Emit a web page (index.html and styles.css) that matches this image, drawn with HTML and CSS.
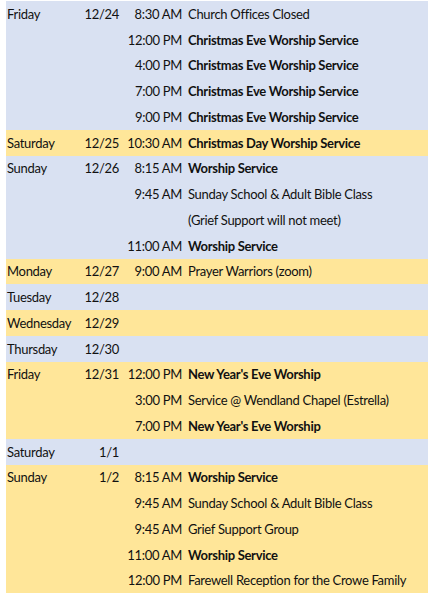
FILE: index.html
```html
<!DOCTYPE html>
<html>
<head>
<meta charset="utf-8">
<link rel="stylesheet" href="styles.css">
</head>
<body>
<div class="schedule">
  <div class="day blue">
    <div class="row"><span class="d">Friday</span><span class="dt">12/24</span><span class="t">8:30 AM</span><span class="e">Church Offices Closed</span></div>
    <div class="row"><span class="d"></span><span class="dt"></span><span class="t">12:00 PM</span><span class="e b">Christmas Eve Worship Service</span></div>
    <div class="row"><span class="d"></span><span class="dt"></span><span class="t">4:00 PM</span><span class="e b">Christmas Eve Worship Service</span></div>
    <div class="row"><span class="d"></span><span class="dt"></span><span class="t">7:00 PM</span><span class="e b">Christmas Eve Worship Service</span></div>
    <div class="row"><span class="d"></span><span class="dt"></span><span class="t">9:00 PM</span><span class="e b">Christmas Eve Worship Service</span></div>
  </div>
  <div class="day yellow">
    <div class="row"><span class="d">Saturday</span><span class="dt">12/25</span><span class="t">10:30 AM</span><span class="e b">Christmas Day Worship Service</span></div>
  </div>
  <div class="day blue">
    <div class="row"><span class="d">Sunday</span><span class="dt">12/26</span><span class="t">8:15 AM</span><span class="e b">Worship Service</span></div>
    <div class="row"><span class="d"></span><span class="dt"></span><span class="t">9:45 AM</span><span class="e">Sunday School &amp; Adult Bible Class</span></div>
    <div class="row"><span class="d"></span><span class="dt"></span><span class="t"></span><span class="e">(Grief Support will not meet)</span></div>
    <div class="row"><span class="d"></span><span class="dt"></span><span class="t">11:00 AM</span><span class="e b">Worship Service</span></div>
  </div>
  <div class="day yellow">
    <div class="row"><span class="d">Monday</span><span class="dt">12/27</span><span class="t">9:00 AM</span><span class="e">Prayer Warriors (zoom)</span></div>
  </div>
  <div class="day blue">
    <div class="row"><span class="d">Tuesday</span><span class="dt">12/28</span><span class="t"></span><span class="e"></span></div>
  </div>
  <div class="day yellow">
    <div class="row"><span class="d">Wednesday</span><span class="dt">12/29</span><span class="t"></span><span class="e"></span></div>
  </div>
  <div class="day blue">
    <div class="row"><span class="d">Thursday</span><span class="dt">12/30</span><span class="t"></span><span class="e"></span></div>
  </div>
  <div class="day yellow">
    <div class="row"><span class="d">Friday</span><span class="dt">12/31</span><span class="t">12:00 PM</span><span class="e b">New Year's Eve Worship</span></div>
    <div class="row"><span class="d"></span><span class="dt"></span><span class="t">3:00 PM</span><span class="e">Service @ Wendland Chapel (Estrella)</span></div>
    <div class="row"><span class="d"></span><span class="dt"></span><span class="t">7:00 PM</span><span class="e b">New Year's Eve Worship</span></div>
  </div>
  <div class="day blue">
    <div class="row"><span class="d">Saturday</span><span class="dt">1/1</span><span class="t"></span><span class="e"></span></div>
  </div>
  <div class="day yellow">
    <div class="row"><span class="d">Sunday</span><span class="dt">1/2</span><span class="t">8:15 AM</span><span class="e b">Worship Service</span></div>
    <div class="row"><span class="d"></span><span class="dt"></span><span class="t">9:45 AM</span><span class="e">Sunday School &amp; Adult Bible Class</span></div>
    <div class="row"><span class="d"></span><span class="dt"></span><span class="t">9:45 AM</span><span class="e">Grief Support Group</span></div>
    <div class="row"><span class="d"></span><span class="dt"></span><span class="t">11:00 AM</span><span class="e b">Worship Service</span></div>
    <div class="row"><span class="d"></span><span class="dt"></span><span class="t">12:00 PM</span><span class="e">Farewell Reception for the Crowe Family</span></div>
  </div>
</div>
</body>
</html>
```

FILE: styles.css
```css
html, body {
  margin: 0;
  padding: 0;
  background: #ffffff;
}
body {
  padding: 1px 0 0 6px;
  font-family: "Lato", "Liberation Sans", sans-serif;
  font-size: 13px;
  letter-spacing: -0.3px;
  color: #111111;
}
.schedule {
  display: flex;
  flex-direction: column;
  width: 422px;
}
.blue { background: #d9e1f2; }
.yellow { background: #ffe699; }
.row {
  display: grid;
  grid-template-columns: 76px 37px 63px 1fr;
  height: 25.75px;
  align-items: center;
  white-space: nowrap;
}
.d { padding-left: 1px; }
.dt { text-align: right; }
.t { text-align: right; }
.e { padding-left: 6px; }
.b { font-weight: bold; }
```
